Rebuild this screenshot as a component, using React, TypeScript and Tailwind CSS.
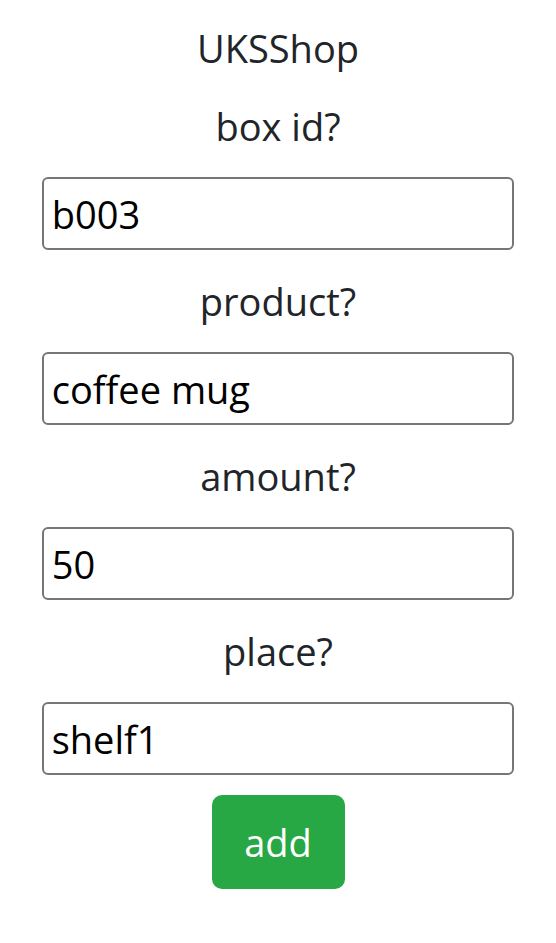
const fields = [
  {label: "box id?", value: "b003"},
  {label: "product?", value: "coffee mug"},
  {label: "amount?", value: "50"},
  {label: "place?", value: "shelf1"},
];

export default function App() {
  return (
    <div className="min-h-[943px] bg-white text-center text-[#212529] font-['Segoe_UI','Open_Sans',sans-serif]">
      <h1 className="pt-[21px] text-[38px] leading-[54px] font-normal">UKSShop</h1>
      <form className="flex flex-col items-center" onSubmit={(e) => e.preventDefault()}>
        {fields.map((f) => (
          <div key={f.label} className="flex w-full flex-col items-center">
            <label className="mt-[24px] mb-[24px] block text-[38px] leading-[54px]">{f.label}</label>
            <input
              defaultValue={f.value}
              className="h-[73px] w-[85%] rounded-[6px] border-2 border-[#767676] px-[8px] text-[38px] text-black outline-none"
            />
          </div>
        ))}
        <button
          type="submit"
          className="mt-[20px] h-[94px] w-[133px] rounded-[10px] bg-[#28a745] text-[38px] text-white"
        >
          add
        </button>
      </form>
    </div>
  );
}
